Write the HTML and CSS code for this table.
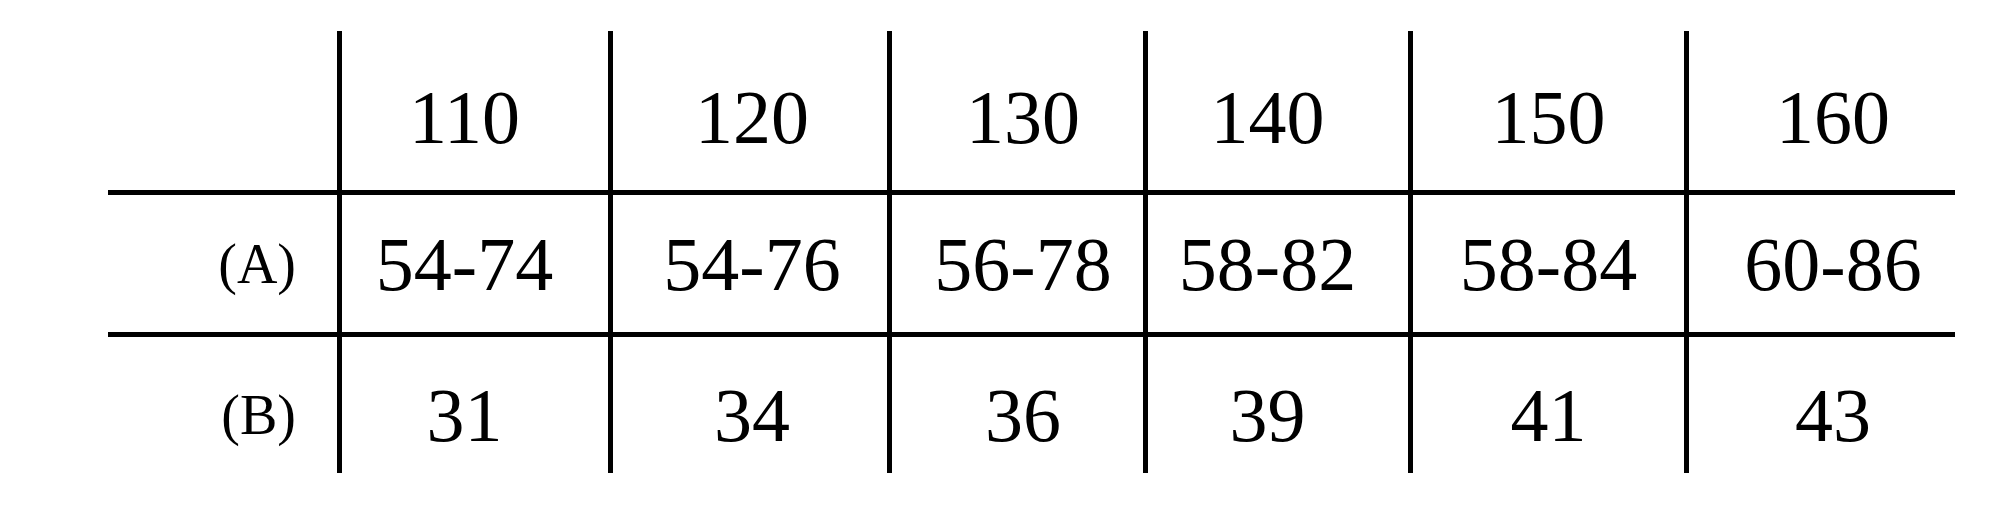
FILE: index.html
```html
<!DOCTYPE html>
<html lang="en">
<head>
<meta charset="utf-8">
<title>Size table</title>
<link rel="stylesheet" href="styles.css">
</head>
<body>
<div class="sheet">
  <div class="grid">
    <div class="cell label head"></div>
    <div class="cell data head vl c1">110</div>
    <div class="cell data head vl c2">120</div>
    <div class="cell data head vl c3">130</div>
    <div class="cell data head vl c4">140</div>
    <div class="cell data head vl c5">150</div>
    <div class="cell data head vl c6">160</div>

    <div class="cell label hl">(A)</div>
    <div class="cell data hl vl c1">54-74</div>
    <div class="cell data hl vl c2">54-76</div>
    <div class="cell data hl vl c3">56-78</div>
    <div class="cell data hl vl c4">58-82</div>
    <div class="cell data hl vl c5">58-84</div>
    <div class="cell data hl vl c6">60-86</div>

    <div class="cell label hl last">(B)</div>
    <div class="cell data hl vl last c1">31</div>
    <div class="cell data hl vl last c2">34</div>
    <div class="cell data hl vl last c3">36</div>
    <div class="cell data hl vl last c4">39</div>
    <div class="cell data hl vl last c5">41</div>
    <div class="cell data hl vl last c6">43</div>
  </div>
</div>
</body>
</html>
```
FILE: styles.css
```css
html, body {
  margin: 0;
  padding: 0;
  background: #ffffff;
}

body {
  font-family: "Liberation Serif", "Times New Roman", serif;
  color: #000000;
}

.sheet {
  padding: 31px 0 0 108px;
}

.grid {
  display: grid;
  grid-template-columns: 229px 271px 279px 256px 265px 276px 271px;
  grid-template-rows: 159px 142px 141px;
  width: 1847px;
}

.cell {
  display: flex;
  align-items: center;
  box-sizing: border-box;
  line-height: 1;
}

.vl {
  border-left: 5px solid #000;
}

.hl {
  border-top: 5px solid #000;
}

.data {
  justify-content: center;
  font-size: 76px;
}

.label {
  justify-content: flex-end;
  padding-right: 41px;
  font-size: 56px;
}

.head {
  padding-top: 13px;
}

.last {
  padding-top: 20px;
}

/* per-column nudges of the centred text */
.c1 { padding-right: 21px; }
.c2 { padding-left: 4px; }
.c3 { padding-left: 11px; }
.c4 { padding-right: 21px; }
.c5 { padding-left: 0; }
.c6 { padding-left: 22px; }
```
